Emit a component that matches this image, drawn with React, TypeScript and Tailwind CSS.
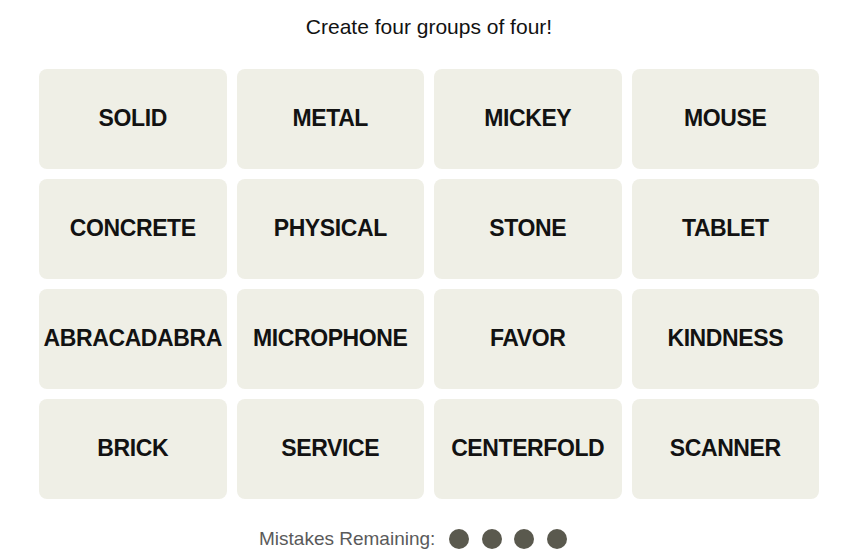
import React from 'react';

const words = [
  'SOLID', 'METAL', 'MICKEY', 'MOUSE',
  'CONCRETE', 'PHYSICAL', 'STONE', 'TABLET',
  'ABRACADABRA', 'MICROPHONE', 'FAVOR', 'KINDNESS',
  'BRICK', 'SERVICE', 'CENTERFOLD', 'SCANNER',
];

const App: React.FC = () => {
  const mistakes = 4;

  return (
    <div className="min-h-[560px] w-[846px] bg-white font-['Liberation_Sans',Arial,sans-serif]">
      <div className="ml-[39px] w-[780px] pt-[15px]">
        <p className="text-center text-[21px] leading-[24px] text-[#121212]">
          Create four groups of four!
        </p>

        {/* Word grid */}
        <div className="mt-[30px] grid grid-cols-4 gap-[10px]">
          {words.map((word) => (
            <button
              key={word}
              className="flex h-[100px] items-center justify-center rounded-lg bg-[#efefe6] pb-[2px] text-[23px] font-bold uppercase tracking-[-0.4px] text-[#121212]"
            >
              {word}
            </button>
          ))}
        </div>

        <div className="ml-[220px] mt-[30px] flex h-[20px] items-center">
          <span className="text-[19px] leading-[20px] text-[#5a5a5a]">Mistakes Remaining:</span>
          <div className="ml-[14px] flex items-center gap-[12.5px]">
            {Array.from({ length: mistakes }, (_, i) => (
              <span key={i} className="h-5 w-5 rounded-full bg-[#5a594e]" />
            ))}
          </div>
        </div>
      </div>
    </div>
  );
};

export default App;
